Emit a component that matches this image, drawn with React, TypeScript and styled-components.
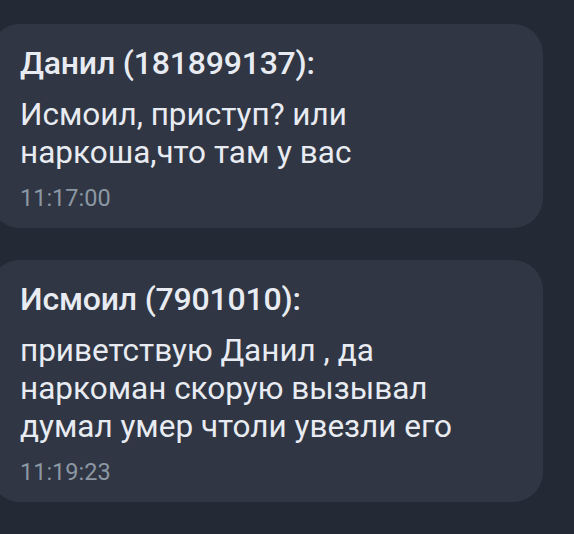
import * as React from 'react';
import styled, { createGlobalStyle } from 'styled-components';

interface IMessage {
  author: string;
  id: string;
  text: string[];
  time: string;
}

const messages: IMessage[] = [
  {
    author: 'Данил',
    id: '181899137',
    text: ['Исмоил, приступ? или', 'наркоша,что там у вас'],
    time: '11:17:00',
  },
  {
    author: 'Исмоил',
    id: '7901010',
    text: ['приветствую Данил , да', 'наркоман скорую вызывал', 'думал умер чтоли увезли его'],
    time: '11:19:23',
  },
];

const GlobalStyle = createGlobalStyle`
  html, body {
    margin: 0;
    padding: 0;
    background: #242a35;
  }
  body {
    font-family: Roboto, "Noto Sans", sans-serif;
    overflow: hidden;
  }
`;

const ChatLog = styled.div`
  display: flex;
  flex-direction: column;
  gap: 32px;
  padding-top: 24px;
  width: 574px;
  height: 534px;
  box-sizing: border-box;
`;

const Bubble = styled.div`
  margin-left: -10px;
  width: 553px;
  box-sizing: border-box;
  padding: 20px 20px 16px 30px;
  background: #303643;
  border-radius: 30px;
  display: flex;
  flex-direction: column;
`;

const Author = styled.div`
  color: #e8ecf2;
  font-size: 32px;
  font-weight: 500;
  line-height: 38px;
  letter-spacing: -0.2px;
  margin-bottom: 14px;
`;

const Body = styled.div`
  color: #e8ecf2;
  font-size: 31.5px;
  line-height: 38px;
`;

const Time = styled.div`
  color: #8c97a4;
  font-size: 23.5px;
  line-height: 28px;
  margin-top: 12px;
`;

const App: React.FunctionComponent = () => (
  <>
    <GlobalStyle />
    <ChatLog>
      {messages.map((m, i) => (
        <Bubble key={i}>
          <Author>
            {m.author} ({m.id}):
          </Author>
          <Body>
            {m.text.map((line, j) => (
              <div key={j}>{line}</div>
            ))}
          </Body>
          <Time>{m.time}</Time>
        </Bubble>
      ))}
    </ChatLog>
  </>
);

export default App;
